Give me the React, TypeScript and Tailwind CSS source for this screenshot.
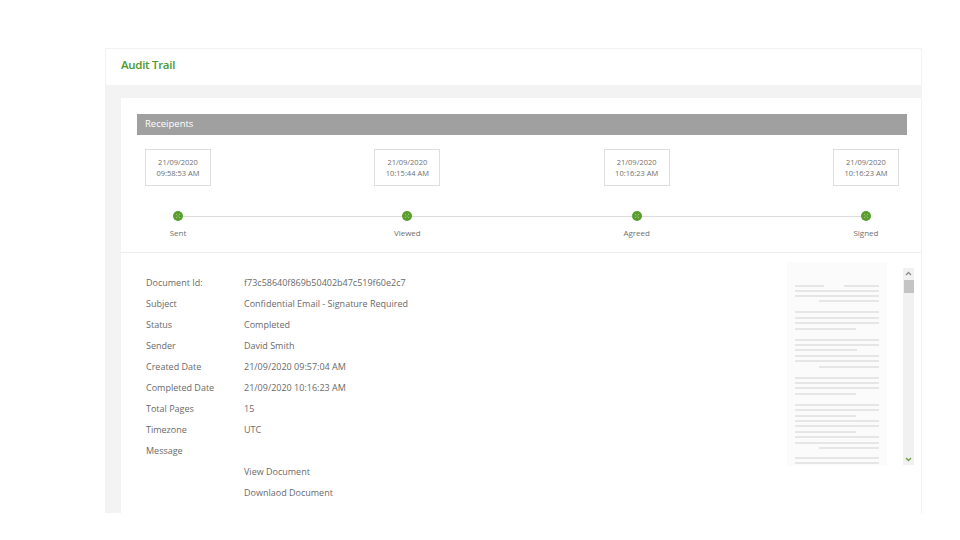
import React from "react";

const font = { fontFamily: '"Open Sans", "Noto Sans", sans-serif' };

const steps = [
  { date: "21/09/2020", time: "09:58:53 AM", label: "Sent" },
  { date: "21/09/2020", time: "10:15:44 AM", label: "Viewed" },
  { date: "21/09/2020", time: "10:16:23 AM", label: "Agreed" },
  { date: "21/09/2020", time: "10:16:23 AM", label: "Signed" },
];

const details: [string, string][] = [
  ["Document Id:", "f73c58640f869b50402b47c519f60e2c7"],
  ["Subject", "Confidential Email - Signature Required"],
  ["Status", "Completed"],
  ["Sender", "David Smith"],
  ["Created Date", "21/09/2020 09:57:04 AM"],
  ["Completed Date", "21/09/2020 10:16:23 AM"],
  ["Total Pages", "15"],
  ["Timezone", "UTC"],
  ["Message", ""],
  ["", "View Document"],
  ["", "Downlaod Document"],
];

function Dot() {
  return (
    <div className="w-[10px] h-[10px] rounded-full bg-[#5b9e2e] shrink-0 flex items-center justify-center">
      <svg width="10" height="10" viewBox="0 0 10 10">
        <circle cx="3.5" cy="3.5" r="0.5" fill="#b9dca0" />
        <circle cx="6.5" cy="3.5" r="0.5" fill="#b9dca0" />
        <circle cx="5" cy="5" r="0.5" fill="#b9dca0" />
        <circle cx="3.5" cy="6.5" r="0.5" fill="#b9dca0" />
        <circle cx="6.5" cy="6.5" r="0.5" fill="#b9dca0" />
      </svg>
    </div>
  );
}

type L = { t: number; l: number; r: number; l2?: boolean };
const lines: L[] = [
  { t: 23, l: 0, r: 0, l2: true },
  { t: 3, l: 0, r: 0 },
  { t: 3, l: 0, r: 0 },
  { t: 3, l: 24, r: 0 },
  { t: 9, l: 0, r: 0 },
  { t: 4, l: 0, r: 0 },
  { t: 3, l: 0, r: 0 },
  { t: 4, l: 0, r: 23 },
  { t: 9, l: 0, r: 0 },
  { t: 3, l: 0, r: 0 },
  { t: 3, l: 0, r: 22 },
  { t: 4, l: 0, r: 0 },
  { t: 3, l: 0, r: 0 },
  { t: 4, l: 24, r: 0 },
  { t: 9, l: 0, r: 0 },
  { t: 3, l: 0, r: 0 },
  { t: 3, l: 0, r: 0 },
  { t: 4, l: 0, r: 23 },
  { t: 9, l: 0, r: 0 },
  { t: 3, l: 0, r: 0 },
  { t: 4, l: 0, r: 23 },
  { t: 3, l: 0, r: 0 },
  { t: 3, l: 0, r: 0 },
  { t: 4, l: 0, r: 23 },
  { t: 3, l: 0, r: 0 },
  { t: 4, l: 0, r: 0 },
  { t: 3, l: 24, r: 0 },
  { t: 8, l: 0, r: 0 },
  { t: 3, l: 0, r: 0 },
];

function DocPreview() {
  return (
    <div className="w-[100px] h-[204px] bg-[#fbfbfb] overflow-hidden px-[8px] flex flex-col">
      {lines.map((ln, i) =>
        ln.l2 ? (
          <div key={i} className="flex justify-between h-[2px] shrink-0" style={{ marginTop: ln.t }}>
            <div className="h-[2px] w-[29px] bg-[#e6e6e6]" />
            <div className="h-[2px] w-[35px] bg-[#e6e6e6]" />
          </div>
        ) : (
          <div
            key={i}
            className="h-[2px] shrink-0 bg-[#e6e6e6]"
            style={{ marginTop: ln.t, marginLeft: ln.l, marginRight: ln.r }}
          />
        )
      )}
    </div>
  );
}

function Scrollbar() {
  return (
    <div className="w-[11px] h-[197px] bg-[#f1f1f1] flex flex-col items-center">
      <div className="h-[11px] flex items-center justify-center">
        <svg width="7" height="5" viewBox="0 0 7 5">
          <path d="M1 4 L3.5 1.5 L6 4" stroke="#8a8a8a" strokeWidth="1.3" fill="none" />
        </svg>
      </div>
      <div className="w-[10px] h-[13px] bg-[#c4c4c4] mt-[1px]" />
      <div className="flex-1" />
      <div className="h-[11px] flex items-center justify-center">
        <svg width="7" height="5" viewBox="0 0 7 5">
          <path d="M1 1 L3.5 3.5 L6 1" stroke="#6a9e44" strokeWidth="1.3" fill="none" />
        </svg>
      </div>
    </div>
  );
}

export default function App() {
  return (
    <div className="w-[960px] h-[540px] bg-white overflow-hidden" style={font}>
      <div className="pt-[48px] pl-[105px]">
        <div className="w-[817px]">
          <div className="h-[37px] border border-b-0 border-[#f2f2f2] flex items-center pl-[15px] pb-[4px]">
            <span className="text-[11.5px] font-semibold text-[#4c9a2a] tracking-[-0.3px]">Audit Trail</span>
          </div>
          <div className="bg-[#f3f3f3] pt-[13px] pl-[16px]">
            <div className="bg-white h-[415px] border-r border-[#f0f0f0] flex flex-col">
              <div className="pt-[16px] pl-[16px] pr-[14px]">
                <div className="h-[21px] bg-[#a0a0a0] flex items-center pl-[8px]">
                  <span className="text-[9.5px] text-white">Receipents</span>
                </div>
              </div>
              <div className="pl-[24px] pr-[22px] pt-[14px]">
                <div className="flex justify-between">
                  {steps.map((s, i) => (
                    <div
                      key={i}
                      className="w-[66px] h-[37px] border border-[#dedede] flex flex-col items-center justify-center text-[7.5px] leading-[11px] text-[#707070]"
                    >
                      <span>{s.date}</span>
                      <span>{s.time}</span>
                    </div>
                  ))}
                </div>
                <div className="flex items-center px-[28px] mt-[25px]">
                  <Dot />
                  <div className="flex-1 h-px bg-[#dcdcdc]" />
                  <Dot />
                  <div className="flex-1 h-px bg-[#dcdcdc]" />
                  <Dot />
                  <div className="flex-1 h-px bg-[#dcdcdc]" />
                  <Dot />
                </div>
                <div className="flex justify-between mt-[5px]">
                  {steps.map((s, i) => (
                    <div key={i} className="w-[66px] text-center text-[8px] leading-[14px] text-[#707070]">
                      {s.label}
                    </div>
                  ))}
                </div>
              </div>
              <div className="mt-[12px] h-px bg-[#ececec]" />
              <div className="flex flex-1">
                <div className="flex-1 pl-[25px] pt-[19px]">
                  {details.map(([k, v], i) => (
                    <div key={i} className="flex h-[21px] items-center text-[9px] text-[#6a6a6a]">
                      <div className="w-[98px]">{k}</div>
                      <div>{v}</div>
                    </div>
                  ))}
                </div>
                <div className="pt-[9px]">
                  <DocPreview />
                </div>
                <div className="pt-[15px] pl-[16px] pr-[7px]">
                  <Scrollbar />
                </div>
              </div>
            </div>
          </div>
        </div>
      </div>
    </div>
  );
}
